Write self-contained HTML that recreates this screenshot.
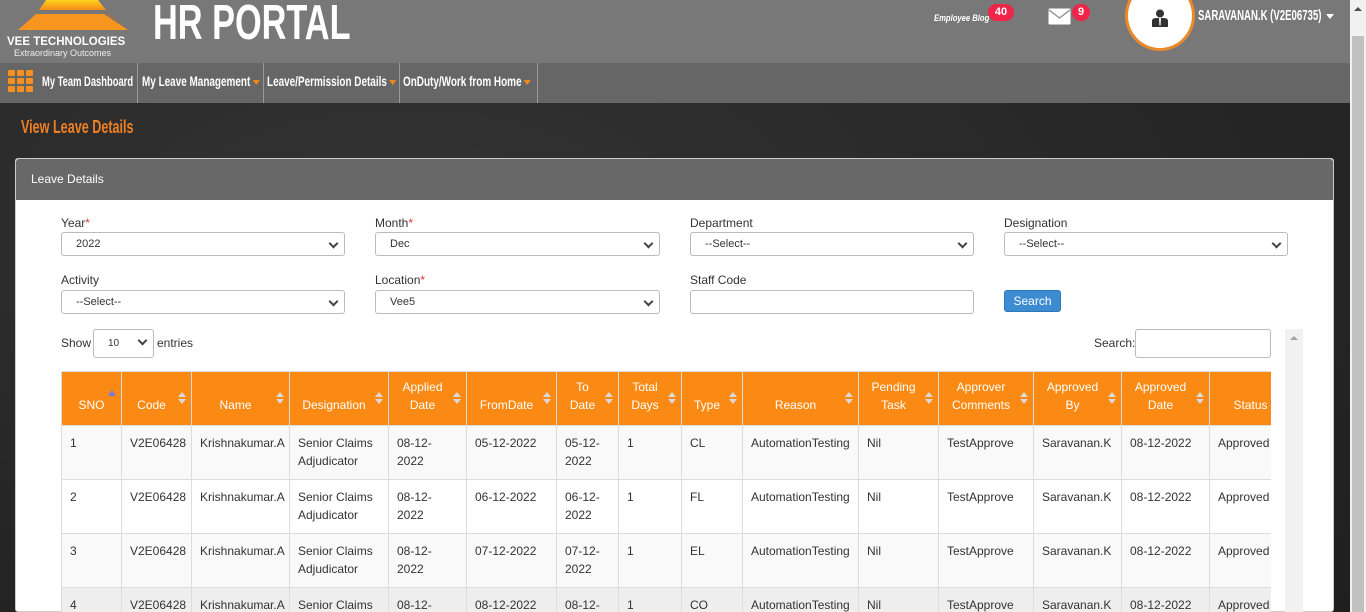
<!DOCTYPE html>
<html><head><meta charset="utf-8">
<style>
*{box-sizing:border-box;margin:0;padding:0}
body{width:1366px;height:612px;overflow:hidden;position:relative;font-family:"Liberation Sans",sans-serif;font-size:12px;color:#333;background:#2b2b2b}
.a{position:absolute;white-space:nowrap}
.hdr{left:0;top:0;width:1350px;height:63px;background:#787878}
.nav{left:0;top:63px;width:1350px;height:40px;background:#666}
.bg{left:0;top:103px;width:1350px;height:509px;background:radial-gradient(ellipse at 30% 20%,#333 0%,#262626 60%,#1f1f1f 100%)}
.navi{top:63px;height:40px;line-height:36px;color:#fff;font-weight:bold;font-size:14px;border-right:1px solid #999;overflow:hidden}
.navi span{display:inline-block;transform:scaleX(0.71);transform-origin:left center}
.caret{display:inline-block;width:0;height:0;border-left:5px solid transparent;border-right:5px solid transparent;border-top:5px solid #f08a1c;vertical-align:middle;margin-left:3px}
.badge{background:#f0254a;color:#fff;font-weight:bold;font-size:11px;border-radius:9px;height:17px;line-height:17px;text-align:center}
.panel{left:15px;top:158px;width:1319px;height:454px;background:#fff;border:1px solid #ccc;border-radius:3px}
.ph{left:16px;top:159px;width:1317px;height:41px;background:#686868;color:#fff;font-size:12px;line-height:40px;padding-left:15px;border-radius:3px 3px 0 0}
.lbl{font-size:12px;color:#333}
.lbl b{color:#e33;font-weight:normal}
.sel{height:24px;border:1px solid #bbb;border-radius:3px;background:#fff;font-size:11px;line-height:22px;padding-left:14px;color:#333}
.sel:after{content:"";position:absolute;right:7px;top:7px;width:5px;height:5px;border-right:2px solid #444;border-bottom:2px solid #444;transform:rotate(45deg)}
table{border-collapse:collapse;position:absolute;left:0;top:0;table-layout:fixed}
th{white-space:normal;background:#fb8a14;color:#fff;font-weight:normal;height:54px;border:1px solid #ddd;font-size:12px;line-height:18px;text-align:center;vertical-align:bottom;padding:0 14px 11px 4px;position:relative}
th:after{content:"";position:absolute;right:5px;top:20px;width:0;height:0;border-left:4px solid transparent;border-right:4px solid transparent;border-bottom:5px solid #d9d9d9}
th:before{content:"";position:absolute;right:5px;top:27px;width:0;height:0;border-left:4px solid transparent;border-right:4px solid transparent;border-top:5px solid #d9d9d9}
th.s:after,th.s:before{display:none}
td{height:54px;border:1px solid #ddd;vertical-align:top;padding:8px 8px;line-height:18px;font-size:12px;color:#333;background:#f9f9f9;white-space:normal}
tr.alt td{background:#fff}
tr.g td{background:#eee}
</style></head><body>
<div class="a hdr"></div>
<div class="a nav"></div>
<div class="a bg"></div>
<svg class="a" style="left:6px;top:0" width="140" height="40" viewBox="0 0 140 40">
<defs><linearGradient id="g1" x1="0" y1="0" x2="0" y2="1"><stop offset="0" stop-color="#ffd21a"/><stop offset="1" stop-color="#f58a1a"/></linearGradient></defs>
<polygon points="40,0 92,0 100,10 33,10" fill="url(#g1)"/>
<polygon points="30,14 98,14 122,30 12,30" fill="#f7951e"/>
<polygon points="98,10 120,28 104,16" fill="#c96a10"/>
</svg>
<div class="a" style="left:7px;top:36px;color:#fff;font-weight:bold;font-size:11.5px">VEE TECHNOLOGIES</div>
<div class="a" style="left:14px;top:48px;color:#eee;font-size:9px">Extraordinary Outcomes</div>
<div class="a" style="left:153px;top:-5px;color:#fff;font-weight:bold;font-size:49px;transform:scaleX(0.7);transform-origin:left">HR PORTAL</div>
<div class="a" style="left:934px;top:13px;color:#fff;font-style:italic;font-weight:bold;font-size:9px;transform:scaleX(0.85);transform-origin:left">Employee Blog</div>
<div class="a badge" style="left:988px;top:4px;width:26px">40</div>
<svg class="a" style="left:1048px;top:8px" width="23" height="17" viewBox="0 0 23 17"><rect x="0.5" y="0.5" width="22" height="16" rx="1" fill="#fff"/><polyline points="1,2 11.5,10 22,2" fill="none" stroke="#888" stroke-width="1.2"/></svg>
<div class="a badge" style="left:1072px;top:4px;width:18px">9</div>
<div class="a" style="left:1125px;top:-20px;width:70px;height:71px;border-radius:50%;background:#fff;border:3px solid #e98a2a"></div>
<svg class="a" style="left:1151px;top:9px" width="18" height="18" viewBox="0 0 18 18"><circle cx="9" cy="4.5" r="4" fill="#333"/><path d="M1,18 L1,12 Q1,9 5,9 L13,9 Q17,9 17,12 L17,18 Z" fill="#333"/><path d="M8,9 L10,9 L9.6,16 L9,17 L8.4,16Z" fill="#fff"/></svg>
<div class="a" style="left:1198px;top:7px;color:#fff;font-weight:bold;font-size:15px;transform:scaleX(0.64);transform-origin:left">SARAVANAN.K (V2E06735)</div>
<div class="a" style="left:1326px;top:14px;border-left:4px solid transparent;border-right:4px solid transparent;border-top:5px solid #fff"></div>
<svg class="a" style="left:8px;top:70px" width="26" height="22" viewBox="0 0 26 22"><g fill="#f7901e"><rect x="0" y="0" width="7" height="6" rx="1"/><rect x="9" y="0" width="7" height="6" rx="1"/><rect x="18" y="0" width="7" height="6" rx="1"/><rect x="0" y="8" width="7" height="6" rx="1"/><rect x="9" y="8" width="7" height="6" rx="1"/><rect x="18" y="8" width="7" height="6" rx="1"/><rect x="0" y="16" width="7" height="6" rx="1"/><rect x="9" y="16" width="7" height="6" rx="1"/><rect x="18" y="16" width="7" height="6" rx="1"/></g></svg>
<div class="a navi" style="left:40px;width:98px;padding-left:2px"><span style="transform:scaleX(0.67)">My Team Dashboard</span></div>
<div class="a navi" style="left:138px;width:126px;padding-left:4px"><span>My Leave Management<i class="caret"></i></span></div>
<div class="a navi" style="left:264px;width:136px;padding-left:3px"><span>Leave/Permission Details<i class="caret"></i></span></div>
<div class="a navi" style="left:400px;width:138px;padding-left:3px"><span>OnDuty/Work from Home<i class="caret"></i></span></div>
<div class="a" style="left:21px;top:117px;color:#ee7f22;font-size:18px;font-weight:bold;transform:scaleX(0.7);transform-origin:left">View Leave Details</div>
<div class="a panel"></div>
<div class="a ph">Leave Details</div>
<div class="a lbl" style="left:61px;top:216px">Year<b>*</b></div>
<div class="a sel" style="left:61px;top:232px;width:284px">2022</div>
<div class="a lbl" style="left:375px;top:216px">Month<b>*</b></div>
<div class="a sel" style="left:375px;top:232px;width:285px">Dec</div>
<div class="a lbl" style="left:690px;top:216px">Department</div>
<div class="a sel" style="left:690px;top:232px;width:284px">--Select--</div>
<div class="a lbl" style="left:1004px;top:216px">Designation</div>
<div class="a sel" style="left:1004px;top:232px;width:284px">--Select--</div>
<div class="a lbl" style="left:61px;top:273px">Activity</div>
<div class="a sel" style="left:61px;top:290px;width:284px">--Select--</div>
<div class="a lbl" style="left:375px;top:273px">Location<b>*</b></div>
<div class="a sel" style="left:375px;top:290px;width:285px">Vee5</div>
<div class="a lbl" style="left:690px;top:273px">Staff Code</div>
<div class="a" style="left:690px;top:290px;width:284px;height:24px;border:1px solid #bbb;border-radius:3px"></div>
<div class="a" style="left:1004px;top:290px;width:57px;height:22px;background:#3d8bd0;border:1px solid #2e78b8;border-radius:3px;color:#fff;text-align:center;line-height:20px;font-size:12px">Search</div>
<div class="a lbl" style="left:61px;top:336px">Show</div>
<div class="a sel" style="left:93px;top:329px;width:61px;height:29px;line-height:27px;padding-left:14px;font-size:10px">10</div>
<div class="a lbl" style="left:157px;top:336px">entries</div>
<div class="a lbl" style="left:1094px;top:336px">Search:</div>
<div class="a" style="left:1135px;top:329px;width:136px;height:29px;border:1px solid #bbb;border-radius:3px"></div>
<div class="a" style="left:1285px;top:329px;width:18px;height:283px;background:#f1f1f1"></div>
<div class="a" style="left:1290px;top:336px;border-left:4px solid transparent;border-right:4px solid transparent;border-bottom:4px solid #a3a3a3"></div>
<div class="a" style="left:61px;top:371px;width:1210px;height:241px;overflow:hidden;white-space:normal">
<table style="width:1240px">
<colgroup><col style="width:60px"><col style="width:70px"><col style="width:98px"><col style="width:99px"><col style="width:78px"><col style="width:90px"><col style="width:62px"><col style="width:63px"><col style="width:61px"><col style="width:116px"><col style="width:80px"><col style="width:95px"><col style="width:88px"><col style="width:88px"><col style="width:92px"></colgroup>
<tr><th class="s" style="padding-right:4px">SNO</th><th>Code</th><th>Name</th><th>Designation</th><th>Applied Date</th><th>FromDate</th><th>To<br>Date</th><th>Total Days</th><th>Type</th><th>Reason</th><th>Pending Task</th><th>Approver Comments</th><th>Approved<br>By</th><th>Approved Date</th><th>Status</th></tr>
<tr><td>1</td><td>V2E06428</td><td>Krishnakumar.A</td><td>Senior Claims Adjudicator</td><td>08-12-2022</td><td>05-12-2022</td><td>05-12-2022</td><td>1</td><td>CL</td><td>AutomationTesting</td><td>Nil</td><td>TestApprove</td><td>Saravanan.K</td><td>08-12-2022</td><td>Approved</td></tr>
<tr class="alt"><td>2</td><td>V2E06428</td><td>Krishnakumar.A</td><td>Senior Claims Adjudicator</td><td>08-12-2022</td><td>06-12-2022</td><td>06-12-2022</td><td>1</td><td>FL</td><td>AutomationTesting</td><td>Nil</td><td>TestApprove</td><td>Saravanan.K</td><td>08-12-2022</td><td>Approved</td></tr>
<tr><td>3</td><td>V2E06428</td><td>Krishnakumar.A</td><td>Senior Claims Adjudicator</td><td>08-12-2022</td><td>07-12-2022</td><td>07-12-2022</td><td>1</td><td>EL</td><td>AutomationTesting</td><td>Nil</td><td>TestApprove</td><td>Saravanan.K</td><td>08-12-2022</td><td>Approved</td></tr>
<tr class="g"><td>4</td><td>V2E06428</td><td>Krishnakumar.A</td><td>Senior Claims Adjudicator</td><td>08-12-2022</td><td>08-12-2022</td><td>08-12-2022</td><td>1</td><td>CO</td><td>AutomationTesting</td><td>Nil</td><td>TestApprove</td><td>Saravanan.K</td><td>08-12-2022</td><td>Approved</td></tr>
</table>
</div>
<div class="a" style="left:108px;top:390px;border-left:4px solid transparent;border-right:4px solid transparent;border-bottom:6px solid #7a7ad8"></div>
<div class="a" style="left:1350px;top:0;width:16px;height:612px;background:#f1f1f1"></div>
<div class="a" style="left:1352px;top:36px;width:12px;height:576px;background:#c1c1c1"></div>
<div class="a" style="left:1354px;top:7px;border-left:4px solid transparent;border-right:4px solid transparent;border-bottom:4px solid #505050"></div>
</body></html>
